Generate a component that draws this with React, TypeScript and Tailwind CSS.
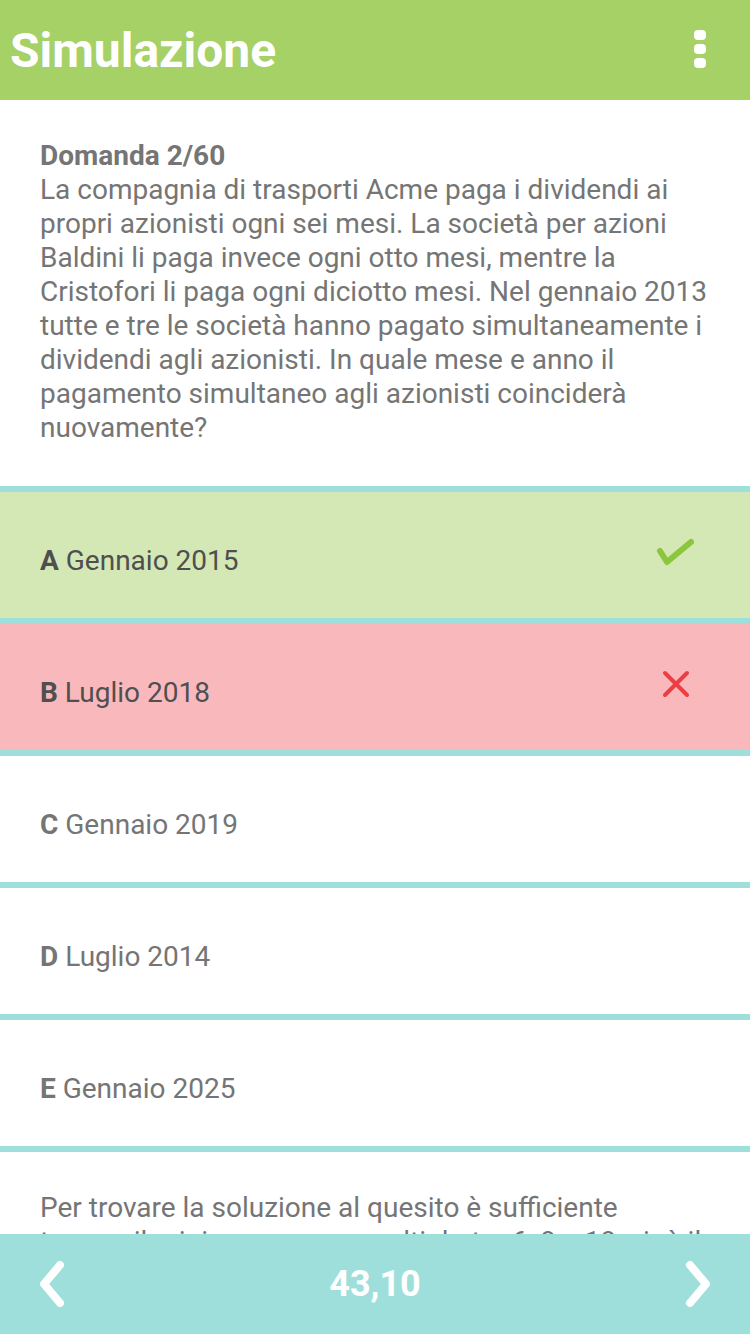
import { Fragment } from "react";

const answers = [
  { id: "A", text: "Gennaio 2015", state: "correct" },
  { id: "B", text: "Luglio 2018", state: "wrong" },
  { id: "C", text: "Gennaio 2019", state: "none" },
  { id: "D", text: "Luglio 2014", state: "none" },
  { id: "E", text: "Gennaio 2025", state: "none" },
];

function CheckIcon() {
  return (
    <svg width="38" height="28" viewBox="0 0 38 28">
      <path
        d="M4 13 L11 24 L35 4"
        fill="none"
        stroke="#8cc63f"
        strokeWidth="6"
        strokeLinecap="round"
        strokeLinejoin="round"
      />
    </svg>
  );
}

function CrossIcon() {
  return (
    <svg width="28" height="28" viewBox="0 0 28 28">
      <path
        d="M3 3 L25 25 M25 3 L3 25"
        stroke="#ec3f43"
        strokeWidth="4"
        strokeLinecap="round"
      />
    </svg>
  );
}

function Chevron({ dir }: { dir: "left" | "right" }) {
  return (
    <svg width="32" height="46" viewBox="0 0 32 46">
      <path
        d={dir == "left" ? "M24 4 L8 23 L24 42" : "M8 4 L24 23 L8 42"}
        fill="none"
        stroke="#ffffff"
        strokeWidth="8"
        strokeLinecap="round"
        strokeLinejoin="round"
      />
    </svg>
  );
}

function App() {
  return (
    <div
      className="flex flex-col h-[1334px] w-[750px] bg-white overflow-hidden"
      style={{ fontFamily: "Roboto, 'Noto Sans', sans-serif" }}
    >
      <header className="h-[100px] shrink-0 bg-[#a5d166] flex items-center justify-between pl-[10px] pr-[44px]">
        <h1 className="text-white font-bold text-[48px] leading-none pt-[2px]">
          Simulazione
        </h1>
        <div className="flex flex-col gap-[4px] mt-[-2px]">
          <span className="block w-[12px] h-[10px] rounded-[4px] bg-white" />
          <span className="block w-[12px] h-[10px] rounded-[4px] bg-white" />
          <span className="block w-[12px] h-[10px] rounded-[4px] bg-white" />
        </div>
      </header>

      <main className="flex-1 overflow-hidden">
        <section className="px-[40px] pt-[39px] pb-[41px] text-[28px] leading-[34px] text-[#757575]">
          <p className="font-bold">Domanda 2/60</p>
          <p>
            La compagnia di trasporti Acme paga i dividendi ai propri azionisti
            ogni sei mesi. La società per azioni Baldini li paga invece ogni
            otto mesi, mentre la Cristofori li paga ogni diciotto mesi. Nel
            gennaio 2013 tutte e tre le società hanno pagato simultaneamente i
            dividendi agli azionisti. In quale mese e anno il pagamento
            simultaneo agli azionisti coinciderà nuovamente?
          </p>
        </section>

        {answers.map((item) => {
          const { id, text, state } = item;
          const bg =
            state == "correct"
              ? "bg-[#d3e8b5] text-[#4f4f4f]"
              : state == "wrong"
              ? "bg-[#f9b9bc] text-[#4f4f4f]"
              : "bg-white text-[#757575]";

          return (
            <Fragment key={id}>
              <div className="h-[6px] bg-[#9fdfdb]" />
              <div
                className={`h-[126px] flex items-center justify-between pl-[40px] pr-[56px] text-[28px] ${bg}`}
              >
                <p className="pt-[11px]">
                  <span className="font-bold">{id}</span> {text}
                </p>
                {state == "correct" && (
                  <div className="mt-[-6px]">
                    <CheckIcon />
                  </div>
                )}
                {state == "wrong" && (
                  <div className="mt-[-6px] mr-[4px]">
                    <CrossIcon />
                  </div>
                )}
              </div>
            </Fragment>
          );
        })}
        <div className="h-[6px] bg-[#9fdfdb]" />

        <section className="px-[40px] pt-[39px] text-[28px] leading-[34px] text-[#757575]">
          <p>
            Per trovare la soluzione al quesito è sufficiente trovare il minimo
            comune multiplo tra 6, 8 e 18, cioè il più piccolo numero che sia
            divisibile per tutti e tre.
          </p>
        </section>
      </main>

      <footer className="h-[100px] shrink-0 bg-[#9fdfdb] flex items-center justify-between px-[36px]">
        <Chevron dir="left" />
        <span className="text-white font-bold text-[36px]">43,10</span>
        <Chevron dir="right" />
      </footer>
    </div>
  );
}

export default App;
